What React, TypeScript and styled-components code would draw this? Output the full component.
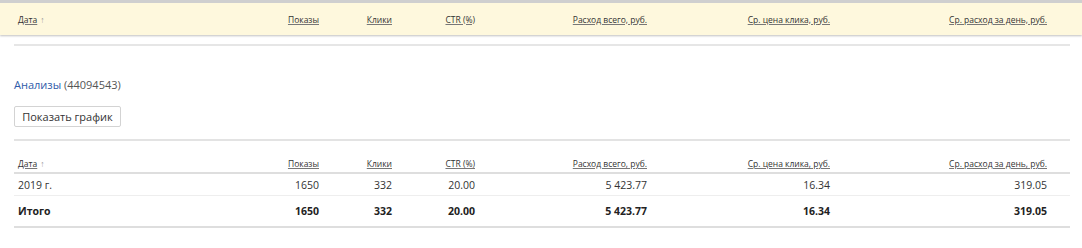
import React from 'react';
import styled, { createGlobalStyle } from 'styled-components';

const GlobalStyle = createGlobalStyle`
  body {
    margin: 0;
    background: #ffffff;
    font-family: 'Open Sans', 'Noto Sans', 'Liberation Sans', sans-serif;
    color: #333333;
  }
`;

const COLUMNS = '221px 80px 73px 83px 172px 183px 217px';

interface Column {
  title: string;
  sort?: boolean;
}

const columns: Column[] = [
  { title: 'Дата', sort: true },
  { title: 'Показы' },
  { title: 'Клики' },
  { title: 'CTR (%)' },
  { title: 'Расход всего, руб.' },
  { title: 'Ср. цена клика, руб.' },
  { title: 'Ср. расход за день, руб.' },
];

const rows = [
  { values: ['2019 г.', '1650', '332', '20.00', '5 423.77', '16.34', '319.05'], total: false },
  { values: ['Итого', '1650', '332', '20.00', '5 423.77', '16.34', '319.05'], total: true },
];

const HeadCells: React.FC = () => (
  <>
    {columns.map((col, idx) => (
      <HeadCell key={idx} first={idx === 0}>
        <HeadLink>{col.title}</HeadLink>
        {col.sort && <SortMark>↑</SortMark>}
      </HeadCell>
    ))}
  </>
);

const App: React.FC = () => {
  return (
    <Page>
      <GlobalStyle />
      <StickyBar>
        <HeadGrid>
          <HeadCells />
        </HeadGrid>
      </StickyBar>
      <Content>
        <Divider />
        <Title>
          <TitleLink>Анализы</TitleLink> (44094543)
        </Title>
        <ChartButton>Показать график</ChartButton>
        <Divider thin />
        <Table>
          <TableHead>
            <HeadCells />
          </TableHead>
          {rows.map((row, rIdx) => (
            <Row key={rIdx} total={row.total}>
              {row.values.map((v, idx) => (
                <Cell key={idx} first={idx === 0}>
                  {v}
                </Cell>
              ))}
            </Row>
          ))}
        </Table>
      </Content>
    </Page>
  );
};

export default App;

const Page = styled.div`
  width: 1082px;
  height: 248px;
  overflow: hidden;
`;

const StickyBar = styled.div`
  border-top: 3px solid #cfcfcf;
  height: 32px;
  background: #fef8dd;
  box-shadow: 0 1px 2px rgba(0, 0, 0, 0.25);
  display: flex;
  align-items: center;
  padding-left: 18px;
`;

const HeadGrid = styled.div`
  display: grid;
  grid-template-columns: ${COLUMNS};
`;

const HeadCell = styled.div<{ first?: boolean }>`
  text-align: ${props => (props.first ? 'left' : 'right')};
  font-size: 8.5px;
  white-space: nowrap;
`;

const HeadLink = styled.span`
  color: #333333;
  text-decoration: underline;
  text-decoration-color: #777777;
`;

const SortMark = styled.span`
  color: #999999;
  margin-left: 3px;
`;

const Content = styled.div`
  width: 1056px;
  padding-left: 14px;
`;

const Divider = styled.div<{ thin?: boolean }>`
  margin-top: ${props => (props.thin ? '12px' : '9px')};
  border-top: 2px solid ${props => (props.thin ? '#e3e3e3' : '#e6e6e6')};
`;

const Title = styled.div`
  margin-top: 32px;
  font-size: 11px;
  line-height: 14px;
  color: #555555;
`;

const TitleLink = styled.span`
  color: #2e5aa8;
`;

const ChartButton = styled.button`
  display: block;
  margin-top: 14px;
  height: 21px;
  width: 107px;
  padding: 0;
  border: 1px solid #d3d3d3;
  border-radius: 2px;
  background: #ffffff;
  font-family: inherit;
  font-size: 11px;
  color: #333333;
`;

const Table = styled.div`
  display: flex;
  flex-direction: column;
`;

const TableHead = styled.div`
  display: grid;
  grid-template-columns: ${COLUMNS};
  height: 33px;
  align-items: end;
  padding: 0 0 3px 4px;
  box-sizing: border-box;
  border-bottom: 2px solid #dedede;
`;

const Row = styled.div<{ total: boolean }>`
  display: grid;
  grid-template-columns: ${COLUMNS};
  align-items: center;
  padding-left: 4px;
  height: ${props => (props.total ? '30px' : '21px')};
  font-size: 10.5px;
  font-weight: ${props => (props.total ? 700 : 400)};
  color: ${props => (props.total ? '#222222' : '#333333')};
  border-bottom: ${props => (props.total ? '2px solid #dedede' : '1px solid #eeeeee')};
`;

const Cell = styled.div<{ first?: boolean }>`
  text-align: ${props => (props.first ? 'left' : 'right')};
  white-space: nowrap;
`;
